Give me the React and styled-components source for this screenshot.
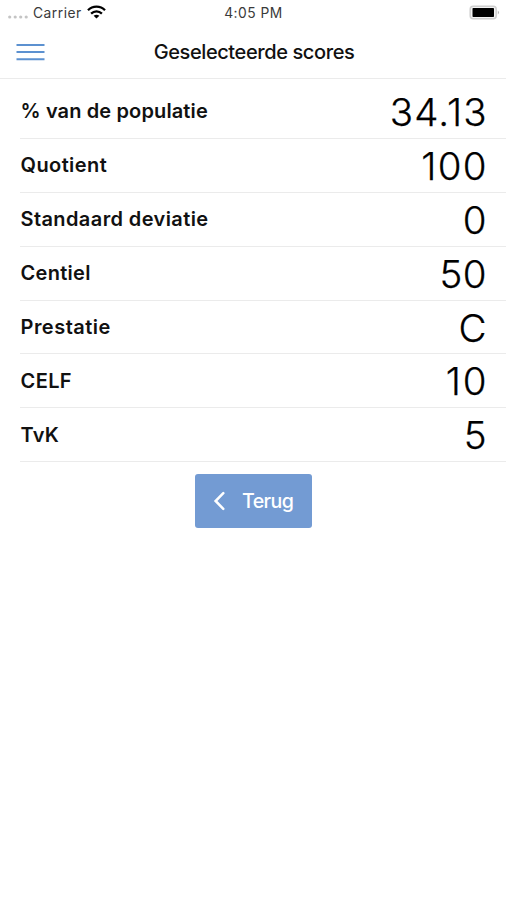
import React from "react";
import styled, { createGlobalStyle } from "styled-components";

const Global = createGlobalStyle`
  * { box-sizing: border-box; }
  body { margin: 0; background: #fff; color: #111; font-family: Inter, "Liberation Sans", sans-serif; }
`;
const Screen = styled.main`
  width: 506px; height: 900px; background: #fff; overflow: hidden;
`;
const StatusBar = styled.div`
  height: 25px; display: grid; grid-template-columns: 1fr auto 1fr; align-items: center;
  padding: 0 6px 0 7px; font-size: 13.8px; color: #3a3a3a;
`;
const Carrier = styled.div`
  display: flex; align-items: center; gap: 5px; letter-spacing: 0.5px;
`;
const Signal = styled.svg`
  display: block; width: 22px; height: 6px; margin: 8px -1px 0 0;
`;
const Wifi = styled.svg`
  display: block; width: 19px; height: 14px; margin: -1px 0 0 0.5px;
`;
const Clock = styled.span`
  letter-spacing: 0.5px;
`;
const Battery = styled.svg`
  display: block; width: 31px; height: 15px; justify-self: end;
`;
const Header = styled.header`
  height: 54px; border-bottom: 1px solid #ebebeb; display: grid;
  grid-template-columns: 60px 1fr 60px; align-items: center; text-align: center;
`;
const MenuButton = styled.button`
  border: 0; background: none; padding: 0; margin-left: 16px; width: 29px; height: 20px; display: block;
`;
const Title = styled.h1`
  margin: 0 0 0 2px; font-size: 20px; font-weight: 500; line-height: 26px; letter-spacing: -0.4px;
`;
const List = styled.ul`
  margin: 0; padding: 6px 0 0 20px; list-style: none;
`;
const Row = styled.li`
  height: 53.9px; border-bottom: 1px solid #ebebeb; padding-right: 19.5px;
  display: flex; align-items: center; justify-content: space-between;
`;
const Label = styled.span`
  font-size: 20px; font-weight: 600; letter-spacing: ${(p) => p.$spacing}px;
  padding-left: 0.5px;
`;
const Value = styled.span`
  font-size: 38.5px; font-weight: 300; line-height: 52px; color: #000;
  -webkit-text-stroke: 0.25px #000;
  letter-spacing: ${(p) => p.$spacing}px; margin-right: ${(p) => -p.$spacing}px;
  padding-top: 1px;
`;
const BackButton = styled.button`
  display: flex; align-items: center; gap: 17px;
  width: 117px; height: 54px; margin: 12px 0 0 195px; padding: 0 0 0 18px;
  border: 0; border-radius: 3px; background: #739bd3; color: #fff;
  font: 500 19.6px Inter, sans-serif; letter-spacing: -0.6px;
`;

const scores = [
  { label: "% van de populatie", value: "34.13", tracking: 0.13, valueTracking: 1.1 },
  { label: "Quotient", value: "100", tracking: 0.42, valueTracking: 1.2 },
  { label: "Standaard deviatie", value: "0", tracking: 0.4, valueTracking: 0 },
  { label: "Centiel", value: "50", tracking: 0.3, valueTracking: 0.4 },
  { label: "Prestatie", value: "C", tracking: 0.48, valueTracking: 0 },
  { label: "CELF", value: "10", tracking: 0.4, valueTracking: 1.8 },
  { label: "TvK", value: "5", tracking: 0.2, valueTracking: 0 },
];

export default function App() {
  return (
    <Screen>
      <Global />
      <StatusBar>
        <Carrier>
          <Signal viewBox="0 0 22 6" fill="#c4c4c4">
            {[2.7, 8.2, 13.7, 19.2].map((x) => <circle key={x} cx={x} cy="3" r="1.6" />)}
          </Signal>
          <span>Carrier</span>
          <Wifi viewBox="0 0 19 14" fill="none" stroke="#000" strokeWidth="2.3">
            <path d="M1 5.2C5.6.5 13.4.5 18 5.2M4.1 8.7C7.2 5.7 11.8 5.7 14.9 8.7" />
            <path d="M6.6 10.8Q9.5 8.6 12.4 10.8L9.5 13.6Z" fill="#000" stroke="none" />
          </Wifi>
        </Carrier>
        <Clock>4:05 PM</Clock>
        <Battery viewBox="0 0 31 15">
          <rect x="1.2" y="1.2" width="26" height="12.6" rx="3" fill="#f4f4f4" stroke="#cfcfcf" strokeWidth="1.5" />
          <rect x="3.5" y="3" width="21.5" height="9" rx=".7" />
          <path d="M28.8 5.5q2.4 2 0 4z" fill="#b5b5b5" />
        </Battery>
      </StatusBar>
      <Header>
        <MenuButton aria-label="Menu">
          <svg width="29" height="20" viewBox="0 0 29 20" stroke="#5c91d0" strokeWidth="2">
            <path d="M.5 3h28M.5 10h28M.5 17.3h28" />
          </svg>
        </MenuButton>
        <Title>Geselecteerde scores</Title>
      </Header>
      <List>
        {scores.map(({ label, value, tracking, valueTracking }) => (
          <Row key={label}>
            <Label $spacing={tracking}>{label}</Label>
            <Value $spacing={valueTracking}>{value}</Value>
          </Row>
        ))}
      </List>
      <BackButton>
        <svg width="12" height="20" viewBox="0 0 12 20" fill="none" stroke="#fff" strokeWidth="2.5" strokeLinecap="round">
          <path d="M10.3 2.2L2.6 10l7.7 7.8" />
        </svg>
        Terug
      </BackButton>
    </Screen>
  );
}
